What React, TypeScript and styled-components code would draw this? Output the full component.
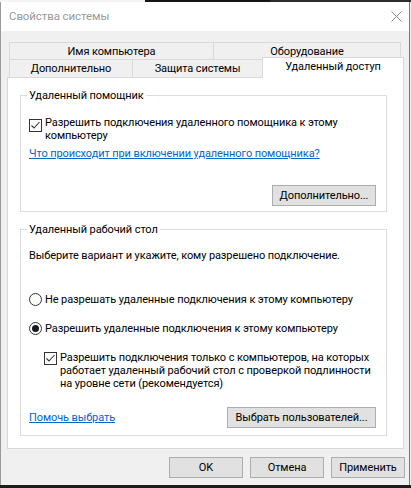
import React from "react";
import styled, { createGlobalStyle } from "styled-components";

const GlobalStyle = createGlobalStyle`
  html, body { margin: 0; padding: 0; background: #f0f0f0; }
  body {
    font-family: Roboto, "Liberation Sans", Arial, sans-serif;
    font-size: 11px;
    letter-spacing: -0.1px;
    color: #000;
  }
  * { box-sizing: border-box; }
`;

const Window = styled.div`
  width: 411px;
  height: 488px;
  display: flex;
  flex-direction: column;
  overflow: hidden;
  background: #f0f0f0;
`;

const Strip = styled.div<{ $h: number }>`
  display: flex;
  flex: none;
  height: ${(p) => p.$h}px;
`;

const StripPart = styled.div<{ $w?: number; $color: string }>`
  height: 100%;
  flex: ${(p) => (p.$w ? `0 0 ${p.$w}px` : "1")};
  background: ${(p) => p.$color};
`;

const Frame = styled.div`
  flex: 1;
  width: 410px;
  display: flex;
  flex-direction: column;
  border-left: 1px solid #9a9a9a;
  border-right: 1px solid #7a7a7a;
  background: #f0f0f0;
`;

const TitleBar = styled.div`
  flex: none;
  height: 29px;
  display: flex;
  align-items: center;
  justify-content: space-between;
  padding: 0 7px 0 8px;
  background: #fff;
`;

const TitleText = styled.span`
  color: #999;
  font-size: 11.5px;
  line-height: 13px;
`;

const Body = styled.div`
  flex: 1;
  display: flex;
  flex-direction: column;
  padding: 11px 5px 0 6px;
`;

const TabStrip = styled.div`
  display: flex;
  flex-direction: column;
  margin-left: 2px;
`;

const TabRow = styled.div<{ $h: number }>`
  display: flex;
  align-items: flex-end;
  height: ${(p) => p.$h}px;
`;

const Tab = styled.div<{ $w: number; $h: number; $selected?: boolean }>`
  flex: none;
  width: ${(p) => p.$w}px;
  height: ${(p) => (p.$selected ? 21 : p.$h)}px;
  display: flex;
  align-items: center;
  justify-content: center;
  border: 1px solid #d9d9d9;
  border-bottom: none;
  margin-left: -1px;
  background: ${(p) => (p.$selected ? "#fff" : "#f0f0f0")};
  line-height: 13px;
  white-space: nowrap;
  &:first-child { margin-left: 0; }
  ${(p) =>
    p.$selected &&
    `
    position: relative;
    z-index: 1;
    margin-bottom: -1px;
    padding-bottom: 3px;
  `}
`;

const Panel = styled.div`
  width: 397px;
  height: 372px;
  flex: none;
  display: flex;
  flex-direction: column;
  gap: 17px;
  padding: 17px 0 0 12px;
  border: 1px solid #d9d9d9;
  background: #fff;
`;

const GroupBox = styled.div<{ $pt: number; $pb: number }>`
  position: relative;
  width: 367px;
  display: flex;
  flex-direction: column;
  align-items: flex-start;
  padding: ${(p) => p.$pt}px 10px ${(p) => p.$pb}px 8px;
  border: 1px solid #dcdcdc;
`;

const Legend = styled.span`
  position: absolute;
  top: -7px;
  left: 6px;
  padding: 0 2px;
  background: #fff;
  line-height: 13px;
  white-space: nowrap;
`;

const Text = styled.div<{ $mt?: number }>`
  line-height: 13px;
  margin-top: ${(p) => p.$mt ?? 0}px;
  white-space: nowrap;
`;

const OptionRow = styled.label<{ $mt?: number; $indent?: number }>`
  display: flex;
  align-items: flex-start;
  gap: 3px;
  margin-top: ${(p) => p.$mt ?? 0}px;
  margin-left: ${(p) => p.$indent ?? 0}px;
  line-height: 13px;
  white-space: nowrap;
`;

const CheckBoxBox = styled.span<{ $top: number }>`
  flex: none;
  width: 13px;
  height: 13px;
  margin-top: ${(p) => p.$top}px;
  border: 1px solid #333;
  background: #fff;
  display: flex;
  align-items: center;
  justify-content: center;
`;

const RadioCircle = styled.span`
  flex: none;
  width: 13px;
  height: 13px;
  border: 1px solid #333;
  border-radius: 50%;
  background: #fff;
  display: flex;
  align-items: center;
  justify-content: center;
`;

const RadioDot = styled.span`
  width: 7px;
  height: 7px;
  border-radius: 50%;
  background: #1a1a1a;
`;

const Link = styled.a<{ $mt?: number }>`
  display: block;
  margin-top: ${(p) => p.$mt ?? 0}px;
  color: #0066cc;
  text-decoration: underline;
  line-height: 13px;
  cursor: pointer;
  white-space: nowrap;
`;

const Button = styled.button<{ $w: number }>`
  flex: none;
  width: ${(p) => p.$w}px;
  height: 21px;
  padding: 0;
  border: 1px solid #adadad;
  background: #e1e1e1;
  color: #000;
  font-family: inherit;
  font-size: 11px;
  letter-spacing: -0.1px;
  line-height: 13px;
  white-space: nowrap;
`;

const ButtonRight = styled.div<{ $mt: number }>`
  align-self: stretch;
  display: flex;
  justify-content: flex-end;
  margin-top: ${(p) => p.$mt}px;
`;

const LinkButtonRow = styled.div<{ $mt: number }>`
  align-self: stretch;
  display: flex;
  align-items: center;
  justify-content: space-between;
  margin-top: ${(p) => p.$mt}px;
`;

const DialogButtons = styled.div`
  display: flex;
  justify-content: flex-end;
  gap: 7px;
  margin-top: 8px;
  margin-right: -1px;
`;

const CloseIcon = () => (
  <svg width="11" height="11" viewBox="0 0 11 11">
    <path d="M0.5 0.5 L10.5 10.5 M10.5 0.5 L0.5 10.5" stroke="#8a8a8a" strokeWidth="1" fill="none" />
  </svg>
);

const CheckBox = ({ top }: { top: number }) => (
  <CheckBoxBox $top={top}>
    <svg width="11" height="11" viewBox="0 0 11 11">
      <polyline points="1.5,5.5 4,8 9.5,2" stroke="#333" strokeWidth="1.1" fill="none" />
    </svg>
  </CheckBoxBox>
);

const Radio = ({ checked }: { checked?: boolean }) => (
  <RadioCircle>{checked && <RadioDot />}</RadioCircle>
);

export default function App() {
  return (
    <>
      <GlobalStyle />
      <Window>
        <Strip $h={2}>
          <StripPart $w={145} $color="#f4f4f4" />
          <StripPart $w={125} $color="#151515" />
          <StripPart $color="#2c2c2c" />
        </Strip>
        <Frame>
          <TitleBar>
            <TitleText>Свойства системы</TitleText>
            <CloseIcon />
          </TitleBar>
          <Body>
            <TabStrip>
              <TabRow $h={17}>
                <Tab $w={205} $h={17}>Имя компьютера</Tab>
                <Tab $w={188} $h={17}>Оборудование</Tab>
              </TabRow>
              <TabRow $h={18}>
                <Tab $w={124} $h={18}>Дополнительно</Tab>
                <Tab $w={131} $h={18}>Защита системы</Tab>
                <Tab $w={142} $h={18} $selected>Удаленный доступ</Tab>
              </TabRow>
            </TabStrip>
            <Panel>
              <GroupBox $pt={20} $pb={5}>
                <Legend>Удаленный помощник</Legend>
                <OptionRow>
                  <CheckBox top={3} />
                  <span>
                    Разрешить подключения удаленного помощника к этому
                    <br />
                    компьютеру
                  </span>
                </OptionRow>
                <Link $mt={5}>Что происходит при включении удаленного помощника?</Link>
                <ButtonRight $mt={25}>
                  <Button $w={104}>Дополнительно...</Button>
                </ButtonRight>
              </GroupBox>
              <GroupBox $pt={19} $pb={7}>
                <Legend>Удаленный рабочий стол</Legend>
                <Text>Выберите вариант и укажите, кому разрешено подключение.</Text>
                <OptionRow $mt={31}>
                  <Radio />
                  <span>Не разрешать удаленные подключения к этому компьютеру</span>
                </OptionRow>
                <OptionRow $mt={16}>
                  <Radio checked />
                  <span>Разрешить удаленные подключения к этому компьютеру</span>
                </OptionRow>
                <OptionRow $mt={16} $indent={15}>
                  <CheckBox top={1} />
                  <span>
                    Разрешить подключения только с компьютеров, на которых
                    <br />
                    работает удаленный рабочий стол с проверкой подлинности
                    <br />
                    на уровне сети (рекомендуется)
                  </span>
                </OptionRow>
                <LinkButtonRow $mt={17}>
                  <Link>Помочь выбрать</Link>
                  <Button $w={149}>Выбрать пользователей...</Button>
                </LinkButtonRow>
              </GroupBox>
            </Panel>
            <DialogButtons>
              <Button $w={74}>OK</Button>
              <Button $w={74}>Отмена</Button>
              <Button $w={74}>Применить</Button>
            </DialogButtons>
          </Body>
        </Frame>
        <Strip $h={3}>
          <StripPart $color="#1c1c1c" />
        </Strip>
      </Window>
    </>
  );
}
